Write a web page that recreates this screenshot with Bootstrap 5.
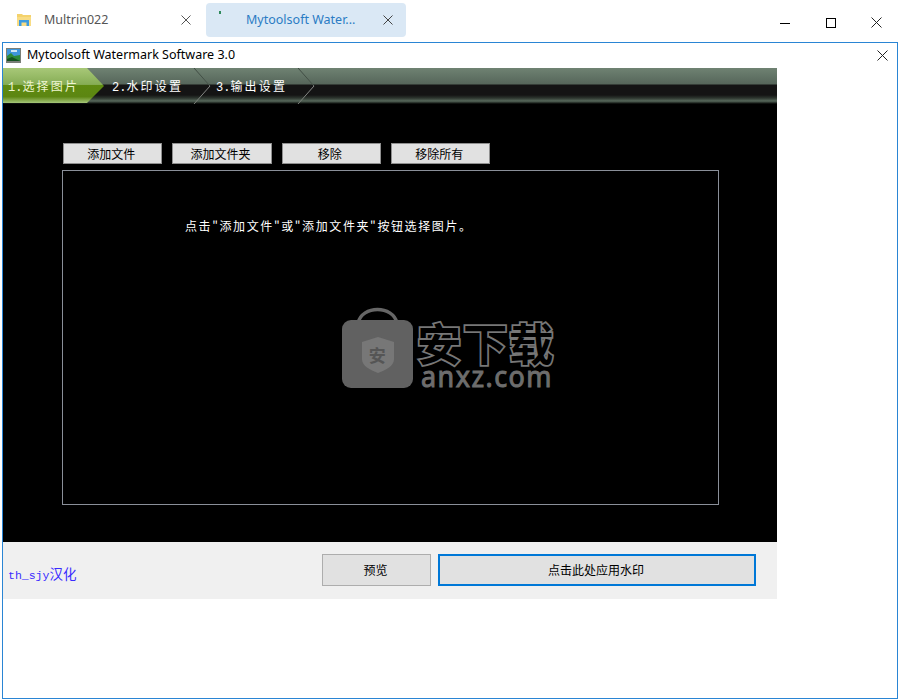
<!DOCTYPE html>
<html lang="zh-CN">
<head>
  <meta charset="UTF-8" />
  <title>Mytoolsoft Watermark Software 3.0</title>
  <link href="https://cdn.jsdelivr.net/npm/bootstrap@5.3.0/dist/css/bootstrap.min.css" rel="stylesheet" />
  <style>
    html, body { height: 700px; overflow: hidden; background: #fff; }
    body { font-family: "Liberation Sans", "Noto Sans CJK SC", sans-serif; color: #000; }
    .tabstrip { height: 42px; padding-top: 3px; }
    .doc-tab { height: 34px; width: 200px; font-family: "Noto Sans", "Noto Sans CJK SC", sans-serif; font-size: 12.5px; color: #555; }
    .doc-tab.first { width: 206px; padding-left: 17px; padding-right: 15px; }
    .doc-tab.active { background: #dae8f5; border-radius: 4px; color: #2b7cc4; padding-left: 12px; padding-right: 13px; }
    .doc-tab .tab-title { margin-left: 13px; }
    .doc-tab.active .tab-title { margin-left: 24px; }
    .win-btns { width: 120px; padding-right: 2px; }
    .win-btns svg { display: block; }
    .appwin { height: 657px; margin: 0 2px; border: 1px solid #2a85d4; }
    .titlebar { height: 25px; padding-left: 3px; padding-right: 9px; font-family: "Noto Sans", sans-serif; font-size: 12.5px; }
    .titlebar .app-icon { margin-right: 6px; }
    .appbody { width: 774px; }
    .stepband { position: relative; height: 36px; background: linear-gradient(#6f8272 0, #56665a 16px, #141414 17px, #141414 27px, #2c352e 30px, #58695c 33px, #3a463d 34px, #000 36px); font-family: "Liberation Mono", "Noto Sans CJK SC", monospace; font-size: 12px; color: #fff; }
    .stepband svg { position: absolute; left: 0; top: 0; }
    .step-item { position: relative; height: 36px; padding-top: 12px; line-height: 17px; letter-spacing: 2.2px; }
    .step-num { letter-spacing: 0; }
    .s1 { width: 109px; padding-left: 5px; color: #eef5d0; }
    .s2 { width: 104px; }
    .s3 { width: 100px; }
    .workarea { height: 438px; background: #000; padding: 39px 58px 0 60px; }
    .flatbtn { height: 21px; width: 99.33px; padding: 0 3px 0 0; border: 1px solid #8f8f8f; border-radius: 0; background: #e1e1e1; color: #000; font-family: "Noto Sans CJK SC", sans-serif; font-size: 12px; line-height: 19px; }
    .btnrow { gap: 10px; height: 27px; }
    .dropbox { position: relative; height: 335px; width: 657px; margin-left: -1px; border: 1px solid #8a8f99; color: #fff; font-family: "Noto Sans CJK SC", sans-serif; font-size: 12px; padding: 46px 0 0 122px; letter-spacing: 1.6px; line-height: 18px; }
    .wm-logo { position: absolute; left: 278px; top: 135px; }
    .wm-logo text { font-family: "Noto Sans CJK SC", sans-serif; }
    .wm-logo .wm-cn { paint-order: stroke; }
    .wm-logo .wm-en { font-family: "Noto Sans", sans-serif; }
    .footbar { height: 57px; background: #f0f0f0; padding: 12px 21px 0 5px; }
    .credit { margin-top: 14px; font-family: "Liberation Mono", "Noto Sans CJK SC", monospace; font-size: 11.5px; color: #3a2cff; line-height: 16px; }
    .credit span { font-size: 13.5px; }
    .bigbtn { height: 32px; padding: 0 2px 0 0; border: 1px solid #adadad; border-radius: 0; background: #e1e1e1; color: #000; font-family: "Noto Sans CJK SC", sans-serif; font-size: 12px; line-height: 28px; }
    .bigbtn.preview { width: 109px; }
    .bigbtn.apply { width: 318px; margin-left: 7px; border: 2px solid #0078d7; }
  </style>
</head>
<body>
  <div class="tabstrip d-flex">
    <div class="doc-tab first d-flex align-items-center">
      <svg width="14" height="14" viewBox="0 0 14 14"><path d="M0 1h5l1 1h8v3H0z" fill="#f4d26c"/><path d="M0 4h14v9H0z" fill="#f8dc84"/><path d="M2 13V7h10v6H9.500V9.500h-5V13z" fill="#3c9be0"/></svg>
      <span class="tab-title flex-grow-1">Multrin022</span>
      <svg width="10" height="10" viewBox="0 0 10 10"><path d="M.5.5l9 9M9.500.5l-9 9" stroke="#555" fill="none"/></svg>
    </div>
    <div class="doc-tab active d-flex align-items-center">
      <svg class="align-self-start mt-2" width="4" height="4" viewBox="0 0 4 4"><rect width="2" height="3" x="1" fill="#2f8a5c"/></svg>
      <span class="tab-title flex-grow-1">Mytoolsoft Water...</span>
      <svg width="10" height="10" viewBox="0 0 10 10"><path d="M.5.5l9 9M9.500.5l-9 9" stroke="#444" fill="none"/></svg>
    </div>
    <div class="win-btns ms-auto d-flex align-items-center justify-content-between">
      <svg width="10" height="10" viewBox="0 0 10 10"><path d="M0 5.500h10" stroke="#000" fill="none"/></svg>
      <svg width="10" height="10" viewBox="0 0 10 10"><rect x=".5" y=".5" width="9" height="9" stroke="#000" fill="none"/></svg>
      <svg class="me-3" width="11" height="11" viewBox="0 0 11 11"><path d="M.5.500l10 10M10.500.5l-10 10" stroke="#222" fill="none"/></svg>
    </div>
  </div>

  <div class="appwin">
    <div class="titlebar d-flex align-items-center">
      <svg class="app-icon" width="15" height="15" viewBox="0 0 15 15">
        <rect width="15" height="15" fill="#7a7f78"/>
        <rect x="1" y="1" width="13" height="7" fill="#3f96dc"/>
        <path d="M5 2h6v2H5z" fill="#cfe6f5"/>
        <path d="M1 8l4-3 3 3 6-1v6H1z" fill="#2e8a3a"/>
        <path d="M1 11l5-2 8 4H1z" fill="#14521f"/>
      </svg>
      <span class="flex-grow-1">Mytoolsoft Watermark Software 3.0</span>
      <svg width="11" height="11" viewBox="0 0 11 11"><path d="M.5.500l10 10M10.500.5l-10 10" stroke="#222" fill="none"/></svg>
    </div>
    <div class="appbody">
      <div class="stepband d-flex">
        <svg width="774" height="36" viewBox="0 0 774 36">
          <defs>
            <linearGradient id="greenstep" x1="0" y1="0" x2="0" y2="1">
              <stop offset="0" stop-color="#a8c878"/>
              <stop offset=".47" stop-color="#86ad55"/>
              <stop offset=".5" stop-color="#5e8a10"/>
              <stop offset=".82" stop-color="#5c8612"/>
              <stop offset="1" stop-color="#a6c67a"/>
            </linearGradient>
            <linearGradient id="chevline" gradientUnits="userSpaceOnUse" x1="0" y1="0" x2="0" y2="36">
              <stop offset="0" stop-color="#3e4a41"/>
              <stop offset=".47" stop-color="#465349"/>
              <stop offset=".5" stop-color="#8a8a8a"/>
              <stop offset="1" stop-color="#7a7f78"/>
            </linearGradient>
          </defs>
          <path d="M0 0H84L101 18 84 35H0z" fill="url(#greenstep)"/>
          <path d="M191 0l16 18-16 18M295 0l16 18-16 18" fill="none" stroke="url(#chevline)"/>
        </svg>
        <div class="step-item s1"><span class="step-num">1.</span>选择图片</div>
        <div class="step-item s2"><span class="step-num">2.</span>水印设置</div>
        <div class="step-item s3"><span class="step-num">3.</span>输出设置</div>
      </div>
      <div class="workarea">
        <div class="btnrow d-flex">
          <button class="flatbtn" type="button">添加文件</button>
          <button class="flatbtn" type="button">添加文件夹</button>
          <button class="flatbtn" type="button">移除</button>
          <button class="flatbtn" type="button">移除所有</button>
        </div>
        <div class="dropbox">
          点击"添加文件"或"添加文件夹"按钮选择图片。
          <svg class="wm-logo" width="224" height="90" viewBox="0 0 224 90">
            <path d="M17 17C21 -1 52 -1 56 17" fill="none" stroke="#666" stroke-width="3.500"/>
            <rect x="1" y="14" width="71" height="68" rx="9" fill="#616161"/>
            <path d="M21 36l16-5 16 5v17c0 7-8 11-16 14-8-3-16-7-16-14z" fill="#777"/>
            <text x="37" y="56" font-size="17" text-anchor="middle" fill="#555" font-weight="700">安</text>
            <text class="wm-cn" x="76" y="55" font-size="44" textLength="138" lengthAdjust="spacingAndGlyphs" fill="#000" stroke="#777" stroke-width="3.500" font-weight="700">安下载</text>
            <text class="wm-en" x="80" y="81" font-size="29" textLength="132" lengthAdjust="spacingAndGlyphs" fill="#6d6d6d" stroke="#6d6d6d" stroke-width="1">anxz.com</text>
          </svg>
        </div>
      </div>
      <div class="footbar d-flex">
        <div class="credit flex-grow-1">th_sjy<span>汉化</span></div>
        <button class="bigbtn preview" type="button">预览</button>
        <button class="bigbtn apply" type="button">点击此处应用水印</button>
      </div>
    </div>
  </div>
</body>
</html>
